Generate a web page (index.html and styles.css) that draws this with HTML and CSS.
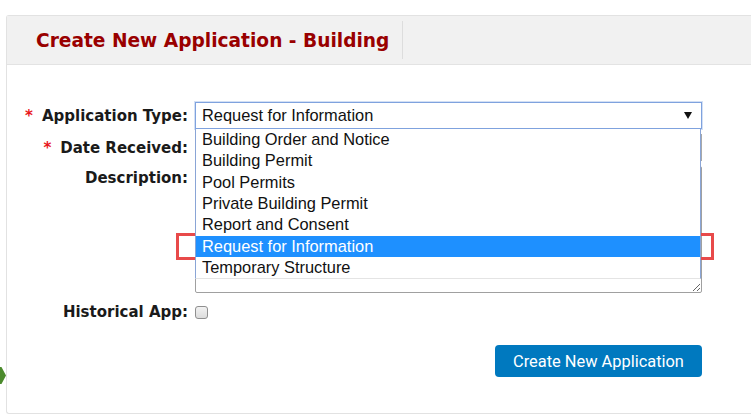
FILE: index.html
```html
<!DOCTYPE html>
<html>
<head>
<meta charset="utf-8">
<title>Create New Application - Building</title>
<link rel="stylesheet" href="styles.css">
</head>
<body>
<div class="page">
  <div class="card">
    <div class="card-header">
      <div class="tab"><h1 class="title">Create New Application - Building</h1></div>
    </div>
    <form class="form">
      <label class="label"><span class="req">*</span>Application Type:</label>
      <div class="select-wrap">
        <div class="select">
          <span class="select-value">Request for Information</span>
          <span class="caret"></span>
        </div>
        <ul class="dropdown">
          <li class="option">Building Order and Notice</li>
          <li class="option">Building Permit</li>
          <li class="option">Pool Permits</li>
          <li class="option">Private Building Permit</li>
          <li class="option">Report and Consent</li>
          <li class="option selected">Request for Information</li>
          <li class="option">Temporary Structure</li>
        </ul>
      </div>

      <label class="label"><span class="req">*</span>Date Received:</label>
      <div class="input"></div>

      <label class="label label-top">Description:</label>
      <textarea class="textarea"></textarea>

      <label class="label">Historical App:</label>
      <div class="check-cell"><span class="checkbox"></span></div>

      <div class="actions">
        <button type="button" class="btn">Create New Application</button>
      </div>
    </form>
  </div>
  <svg class="arrow" width="7" height="18" viewBox="0 0 7 18"><polygon points="0,0 1.5,0 6,8.5 1.5,17 0,17" fill="#4b8a2c"/></svg>
  <div class="highlight-box"></div>
</div>
</body>
</html>
```

FILE: styles.css
```css
html, body {
  margin: 0;
  padding: 0;
  overflow: hidden;
  background: #ffffff;
}

body {
  font-family: "DejaVu Sans", Verdana, sans-serif;
  color: #1a1a1a;
}

.page {
  position: relative;
  padding: 15px 0 0 6px;
  width: 751px;
  height: 420px;
  box-sizing: border-box;
}

.card {
  width: 745px;
  height: 399px;
  box-sizing: border-box;
  border: 1px solid #e2e2e2;
  border-right: none;
  border-radius: 3px 0 0 3px;
  background: #fff;
}

.card-header {
  height: 48px;
  background: #f1f1f1;
  border-bottom: 1px solid #e3e3e3;
  display: flex;
  align-items: center;
}

.tab {
  height: 38px;
  display: flex;
  align-items: center;
  padding: 0 13px 0 29px;
  border-right: 1px solid #dddddd;
}

.title {
  margin: 0;
  font-size: 18.6px;
  font-weight: bold;
  color: #990000;
  white-space: nowrap;
}

.form {
  display: grid;
  grid-template-columns: 181px 507px;
  grid-template-rows: 27px 27px 127px 28px auto;
  column-gap: 7px;
  row-gap: 5px;
  padding-top: 37px;
  margin: 0;
}

.label {
  display: flex;
  justify-content: flex-end;
  align-items: center;
  font-size: 15px;
  font-weight: bold;
  color: #1a1a1a;
  white-space: nowrap;
}

.label-top {
  align-items: flex-start;
  padding-top: 3px;
}

.req {
  color: #e8161c;
  font-weight: bold;
  margin-right: 9px;
}

.select-wrap {
  position: relative;
  z-index: 2;
}

.select {
  height: 27px;
  box-sizing: border-box;
  border: 1px solid #7fa2de;
  box-shadow: 0 0 0 1px rgba(130, 165, 225, 0.35);
  background: #fff;
  display: flex;
  align-items: center;
  justify-content: space-between;
  padding: 0 9px 0 6px;
  font-family: "Liberation Sans", Arial, sans-serif;
  font-size: 16.4px;
  color: #111;
}

.caret {
  width: 0;
  height: 0;
  border-left: 4px solid transparent;
  border-right: 4px solid transparent;
  border-top: 7px solid #111;
}

.dropdown {
  position: absolute;
  top: 100%;
  left: 0;
  right: 1px;
  margin: 0;
  padding: 0;
  list-style: none;
  background: #fff;
  border-left: 1px solid #8aa5d6;
  border-right: 1px solid #8aa5d6;
  border-bottom: 1px solid #e4e4e4;
  font-family: "Liberation Sans", Arial, sans-serif;
  font-size: 16.4px;
  color: #111;
}

.option {
  height: 21.33px;
  line-height: 21.33px;
  padding-left: 6px;
  white-space: nowrap;
}

.option.selected {
  background: #1e90ff;
  color: #fff;
}

.input {
  height: 27px;
  box-sizing: border-box;
  border: 1px solid #a9a9a9;
}

.textarea {
  display: block;
  width: 507px;
  height: 127px;
  box-sizing: border-box;
  margin: 0;
  border: 1px solid #a0a0a0;
  border-radius: 2px;
  resize: both;
  font-family: "Liberation Sans", Arial, sans-serif;
}

.check-cell {
  display: flex;
  align-items: center;
}

.checkbox {
  width: 13px;
  height: 13px;
  box-sizing: border-box;
  border: 1px solid #8f8f8f;
  border-radius: 3px;
  background: linear-gradient(#f2f2f2, #dcdcdc);
}

.actions {
  grid-column: 2;
  display: flex;
  justify-content: flex-end;
  margin-top: 14px;
}

.btn {
  height: 32px;
  width: 207px;
  border: none;
  border-radius: 4px;
  background: #0079bf;
  color: #fff;
  font-family: Roboto, "Noto Sans", sans-serif;
  font-size: 16.4px;
  padding: 0;
  cursor: pointer;
}

.arrow {
  position: absolute;
  left: 0;
  top: 367px;
}

.highlight-box {
  position: absolute;
  left: 176px;
  top: 233px;
  width: 538px;
  height: 27px;
  box-sizing: border-box;
  border: 3px solid #e84a4a;
}
```
